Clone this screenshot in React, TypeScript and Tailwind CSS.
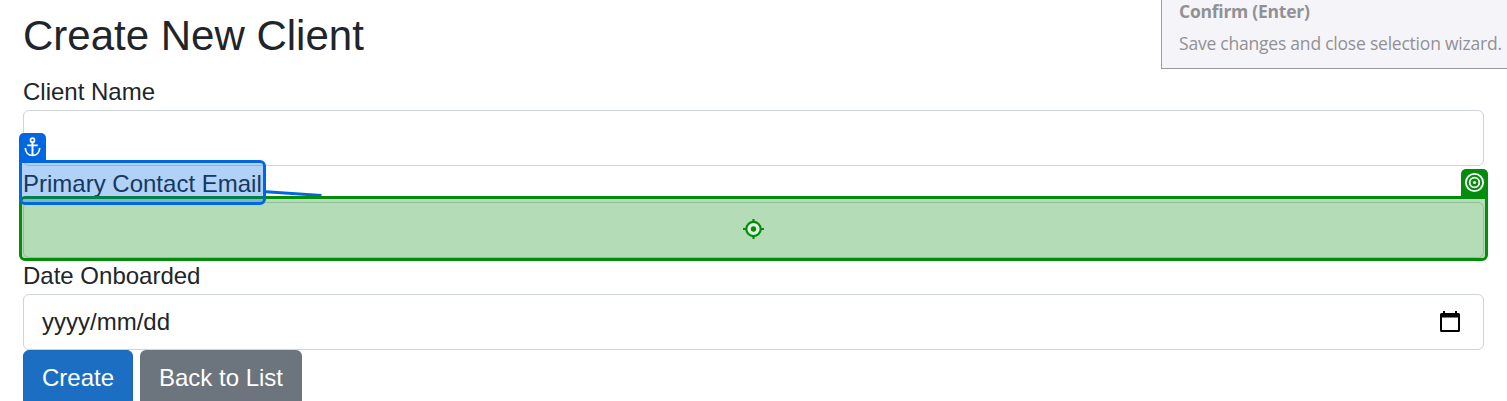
import type { ReactNode } from 'react';

function Field({ label, marker, children }: { label: string; marker?: ReactNode; children?: ReactNode }) {
  return (
    <div className="relative">
      <label className="block h-9 text-2xl leading-9">{label}</label>
      <div className="flex h-14 items-center justify-between rounded-[6px] border border-[#ced4da] bg-white px-[18px] text-2xl">
        {children}
      </div>
      {marker}
    </div>
  );
}

function CalendarIcon() {
  return (
    <svg className="mr-[5px] h-[22px] w-5" viewBox="0 0 20 22">
      <path d="M3 0h2v2h10V0h2v2h1.5A1.5 1.5 0 0 1 20 3.5v16a1.5 1.5 0 0 1-1.500 1.500h-17A1.500 1.500 0 0 1 0 19.500v-16A1.500 1.500 0 0 1 1.500 2H3zM2 6.500v12.500h16V6.500z" fill="#000" />
    </svg>
  );
}

function AnchorIcon() {
  return (
    <svg className="h-5 w-[18px]" viewBox="0 0 18 20" fill="none" stroke="#fff" strokeWidth="1.700">
      <circle cx="8.500" cy="3.200" r="2" />
      <path d="M3.200 8.400h10.600M1.300 11c.2 4.300 3 7.400 7.200 7.400s7-3.100 7.200-7.400" />
      <path d="M8.500 5.200V18.300" strokeWidth="2" />
    </svg>
  );
}

function TargetIcon() {
  return (
    <svg className="h-5 w-5" viewBox="0 0 20 20" fill="none" stroke="#fff" strokeWidth="1.800">
      <circle cx="9.500" cy="9.500" r="8.600" />
      <circle cx="9.500" cy="9.500" r="4.800" />
      <circle cx="9.500" cy="9.500" r="1.600" fill="#fff" stroke="none" />
    </svg>
  );
}

function CrosshairIcon() {
  return (
    <svg className="h-[21px] w-[21px]" viewBox="0 0 21 21" fill="none" stroke="#068c0c" strokeWidth="2.200">
      <circle cx="10.500" cy="11" r="7.200" fill="#e0f1e0" />
      <path d="M10.500 1v3.500M10.500 17.500v3.500M0 11h4M17 11h4" />
      <circle cx="10.500" cy="11" r="2.700" fill="#068c0c" stroke="none" />
    </svg>
  );
}

function TargetMarker() {
  return (
    <div className="absolute -inset-x-1 -bottom-[3px] flex flex-col items-end">
      <div className="flex h-[27px] w-[27px] items-center justify-center rounded-t-[5px] bg-[#068c0c]">
        <TargetIcon />
      </div>
      <div className="flex h-[65px] w-full items-center justify-center rounded-[6px] rounded-tr-none border-3 border-[#068c0c] bg-[#068c0c]/30 bg-clip-padding">
        <CrosshairIcon />
      </div>
    </div>
  );
}

function AnchorMarker() {
  return (
    <div className="absolute -top-[33px] -left-1 flex items-end">
      <div className="w-[247px]">
        <div className="flex h-[27px] w-[27px] items-center justify-center rounded-t-[5px] bg-[#0067e0]">
          <AnchorIcon />
        </div>
        <div className="h-[45px] rounded-[6px] rounded-tl-none border-3 border-[#0067e0] bg-[#0067e0]/30 bg-clip-padding" />
      </div>
      <svg className="mb-[9px] h-4 w-[57px]" viewBox="0 0 57 16">
        <path d="M-2 11.500L55.500 15.500" stroke="#0067e0" strokeWidth="3" />
      </svg>
    </div>
  );
}

export default function App() {
  return (
    <div className="relative h-[401px] w-[1507px] overflow-hidden bg-white font-['Liberation_Sans',Arial,sans-serif] text-[#212529]">
      <main className="px-[23px]">
        <h1 className="h-[74px] pt-[10px] text-[42px] leading-[51px]">Create New Client</h1>
        <Field label="Client Name" />
        <Field label="Primary Contact Email" marker={<><TargetMarker /><AnchorMarker /></>} />
        <Field label="Date Onboarded">
          <span>yyyy/mm/dd</span>
          <CalendarIcon />
        </Field>
        <div className="flex gap-[7px] text-2xl text-white">
          <button className="h-14 w-[110px] rounded-[6px] border border-[#1b68b8] bg-[#1b6ec2]">Create</button>
          <button className="h-14 w-[162px] rounded-[6px] bg-[#6c757d]">Back to List</button>
        </div>
      </main>

      <aside className="absolute top-0 right-0 h-[69px] w-[346px] border-b border-l border-[#9b9b9e] bg-[#f5f4f9] pl-[17px] font-['Open_Sans','Noto_Sans',sans-serif] text-[17.500px] whitespace-nowrap text-[#919194]">
        <p className="h-8 leading-[23px] font-bold tracking-[-0.240px]">Confirm (Enter)</p>
        <p className="leading-[23px] tracking-[-0.220px]">Save changes and close selection wizard.</p>
      </aside>
    </div>
  );
}
